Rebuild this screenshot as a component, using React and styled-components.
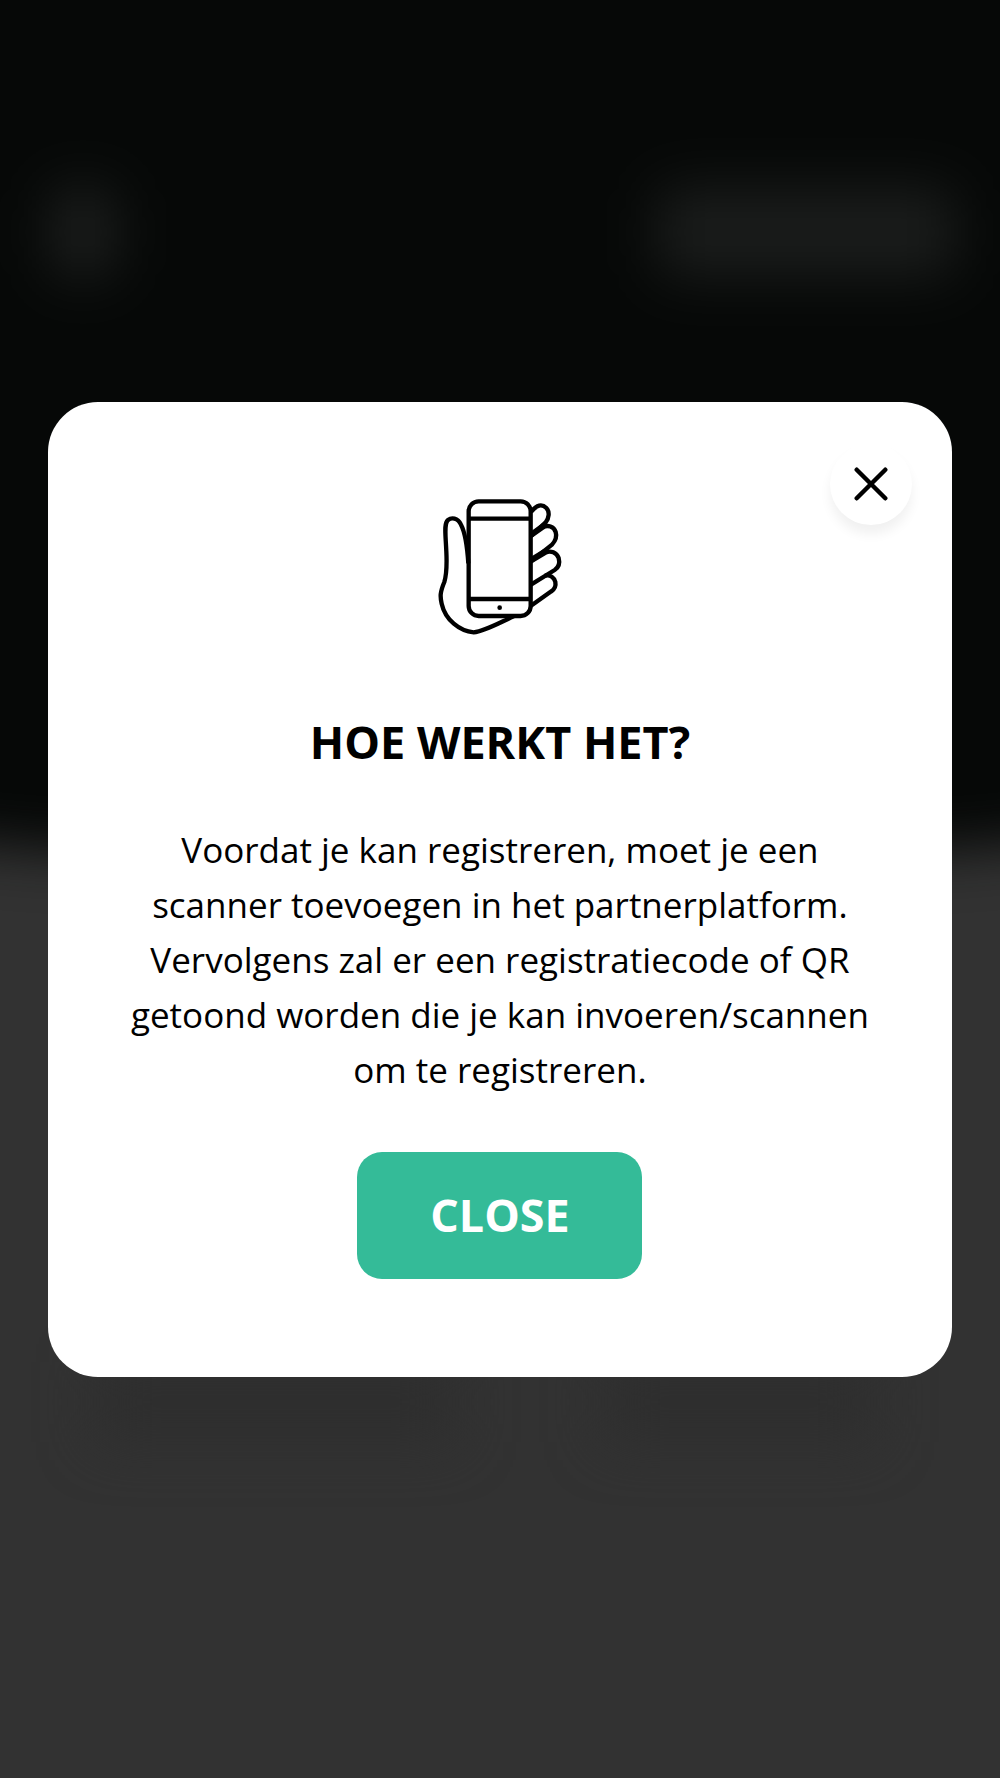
import React from 'react';
import styled, { createGlobalStyle } from 'styled-components';

const GlobalStyle = createGlobalStyle`
  body {
    margin: 0;
    background: #323232;
    font-family: 'Open Sans', 'Noto Sans', sans-serif;
  }
  * {
    box-sizing: border-box;
  }
`;

const Screen = styled.div`
  position: relative;
  width: 1000px;
  height: 1778px;
  overflow: hidden;
  background: #323232;
`;

// page behind the modal, dimmed and out of focus
const Backdrop = styled.div`
  position: absolute;
  inset: -120px -150px 0;
  filter: blur(27px);
`;

const Header = styled.div`
  display: flex;
  justify-content: space-between;
  align-items: flex-start;
  height: 972px;
  padding: 307px 194px 0 200px;
  background: #060807;
  border-radius: 0 0 300px 300px / 0 0 50px 50px;
`;

const Blob = styled.div`
  width: ${props => props.width}px;
  height: 90px;
  border-radius: 20px;
  background: ${props => props.color};
`;

const Shades = styled.div`
  display: flex;
  justify-content: space-between;
  margin-top: 510px;
  padding: 0 276px 0 246px;
`;

const Shade = styled.div`
  width: ${props => props.width}px;
  height: 80px;
  background: #2e2e2e;
`;

const Modal = styled.div`
  position: absolute;
  top: 402px;
  left: 47.7px;
  display: flex;
  flex-direction: column;
  align-items: center;
  width: 904.5px;
  height: 974.5px;
  padding-top: 78px;
  border-radius: 50px;
  background: #fff;
`;

const CloseIcon = styled.button`
  position: absolute;
  top: 40.5px;
  right: 40.5px;
  display: flex;
  align-items: center;
  justify-content: center;
  width: 82px;
  height: 82px;
  padding: 0;
  border: 0;
  border-radius: 50%;
  background: #fff;
  box-shadow: 0 9px 12px rgba(0, 0, 0, 0.06);
`;

const Title = styled.h1`
  margin: 61px 0 0;
  font-size: 45px;
  font-weight: 700;
  line-height: 62px;
  color: #000;
`;

const Text = styled.p`
  margin: 49px 0 0;
  font-size: 35px;
  line-height: 55px;
  text-align: center;
  white-space: nowrap;
  color: #000;
`;

const Button = styled.button`
  width: 285px;
  height: 127px;
  margin: 55px 0 0;
  padding: 0 0 2px;
  border: 0;
  border-radius: 25px;
  background: #34bb98;
  color: #fff;
  font-family: inherit;
  font-size: 44.8px;
  font-weight: 700;
`;

const PhoneInHand = () => (
  <svg
    width="160"
    height="170"
    viewBox="0 0 480 510"
    fill="none"
    stroke="#000"
    strokeWidth="13"
    strokeLinejoin="round"
  >
    <path d="M145 250C142 205 137 160 123 134C113 112 94 112 84 120C71 130 77 165 79 215C81 258 81 280 73 306C60 337 60 350 65 371C76 420 119 453 161 457C193 454 235 430 281 409" />
    <path d="M333 96C350 74 366 71 379 84C390 95 387 115 377 127L333 168" />
    <path d="M333 168L368 143C383 132 402 141 407 156C411 169 406 183 396 194L333 244" />
    <path d="M333 244L377 218C392 210 410 218 416 234C420 249 416 262 404 270L333 314" />
    <path d="M375 287C391 283 403 293 406 306C408 317 403 328 394 334L333 377" />
    <path d="M333 163L370 137M333 239L376 213" strokeWidth="15" />
    <rect x="146" y="64" width="186" height="344" rx="30" />
    <path d="M146 116H332M146 357H332" />
    <circle cx="239" cy="383" r="7" fill="#000" stroke="none" />
  </svg>
);

const Cross = () => (
  <svg
    width="34"
    height="34"
    viewBox="0 0 34 34"
    stroke="#000"
    strokeWidth="4.4"
    strokeLinecap="round"
  >
    <path d="M2.7 2.7L31.3 31.3M31.3 2.7L2.7 31.3" />
  </svg>
);

const App = () => (
  <>
    <GlobalStyle />
    <Screen>
      <Backdrop>
        <Header>
          <Blob width={66} color="#1c1e1d" />
          <Blob width={300} color="#1a1c1b" />
        </Header>
        <Shades>
          <Shade width={360} />
          <Shade width={270} />
        </Shades>
      </Backdrop>
      <Modal>
        <CloseIcon aria-label="Close">
          <Cross />
        </CloseIcon>
        <PhoneInHand />
        <Title>HOE WERKT HET?</Title>
        <Text>
          Voordat je kan registreren, moet je een
          <br />
          scanner toevoegen in het partnerplatform.
          <br />
          Vervolgens zal er een registratiecode of QR
          <br />
          getoond worden die je kan invoeren/scannen
          <br />
          om te registreren.
        </Text>
        <Button>CLOSE</Button>
      </Modal>
    </Screen>
  </>
);

export default App;
